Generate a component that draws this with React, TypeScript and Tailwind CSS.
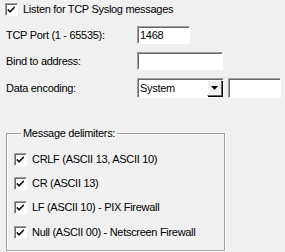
import React from 'react';

const sunken =
  'border border-t-[#a0a0a0] border-l-[#a0a0a0] border-r-white border-b-white bg-white';

const CheckBox: React.FC<{ label: string }> = ({ label }) => (
  <label className="flex items-center h-[13px]">
    <span className={`${sunken} relative w-[13px] h-[13px] shrink-0 shadow-[inset_1px_1px_0_#696969]`}>
      <svg width="11" height="11" viewBox="0 0 11 11" className="absolute left-0 top-0">
        <path d="M2 5 L4 7 L8.5 2.5 L8.5 4 L4 8.5 L2 6.5 Z" fill="#000" stroke="#000" strokeWidth="0.6" />
      </svg>
    </span>
    <span className="ml-[5px] whitespace-nowrap">{label}</span>
  </label>
);

const Field: React.FC<{ w: string; value?: string }> = ({ w, value }) => (
  <div className={`${sunken} ${w} h-[18px] shadow-[inset_1px_1px_0_#696969] pl-[2px] flex items-center leading-none`}>
    {value}
  </div>
);

export default function App() {
  return (
    <div
      className="w-[285px] h-[252px] bg-[#f0f0f0] text-black text-[11px] tracking-[-0.3px] leading-[13px] overflow-hidden pt-[3px]"
      style={{ fontFamily: '"Liberation Sans", Arial, sans-serif' }}
    >
      <div className="pl-[5px]">
        <CheckBox label="Listen for TCP Syslog messages" />
      </div>

      <div className="mt-[10px] pl-[6px] flex flex-col gap-[8px]">
        <div className="flex items-center">
          <span className="w-[131px]">TCP Port (1 - 65535):</span>
          <Field w="w-[53px]" value="1468" />
        </div>
        <div className="flex items-center">
          <span className="w-[131px]">Bind to address:</span>
          <Field w="w-[86px]" />
        </div>
        <div className="flex items-center">
          <span className="w-[131px]">Data encoding:</span>
          <div className={`${sunken} w-[87px] h-[20px] shadow-[inset_1px_1px_0_#696969] flex items-center pl-[2px] pr-[1px]`}>
            <span className="flex-1">System</span>
            <span className="w-[15px] h-[16px] bg-[#f0f0f0] border border-t-white border-l-white border-r-[#696969] border-b-[#696969] shadow-[1px_1px_0_#000] flex items-center justify-center mb-[1px]">
              <svg width="7" height="4" viewBox="0 0 7 4">
                <path d="M0 0 H7 L3.5 4 Z" fill="#000" />
              </svg>
            </span>
          </div>
          <div className={`${sunken} ml-[4px] w-[53px] h-[20px] shadow-[inset_1px_1px_0_#696969]`} />
        </div>
      </div>

      <fieldset className="ml-[6px] mt-[29px] w-[219px] h-[124px] border border-[#a0a0a0] shadow-[1px_1px_0_#fff,inset_1px_1px_0_#fff] px-[7px]">
        <legend className="ml-[7px] px-[2px]">Message delimiters:</legend>
        <div className="mt-[13px] flex flex-col gap-[11px]">
          <CheckBox label="CRLF (ASCII 13, ASCII 10)" />
          <CheckBox label="CR (ASCII 13)" />
          <CheckBox label="LF (ASCII 10) - PIX Firewall" />
          <div className="mt-[1px]">
            <CheckBox label="Null (ASCII 00) - Netscreen Firewall" />
          </div>
        </div>
      </fieldset>
    </div>
  );
}
